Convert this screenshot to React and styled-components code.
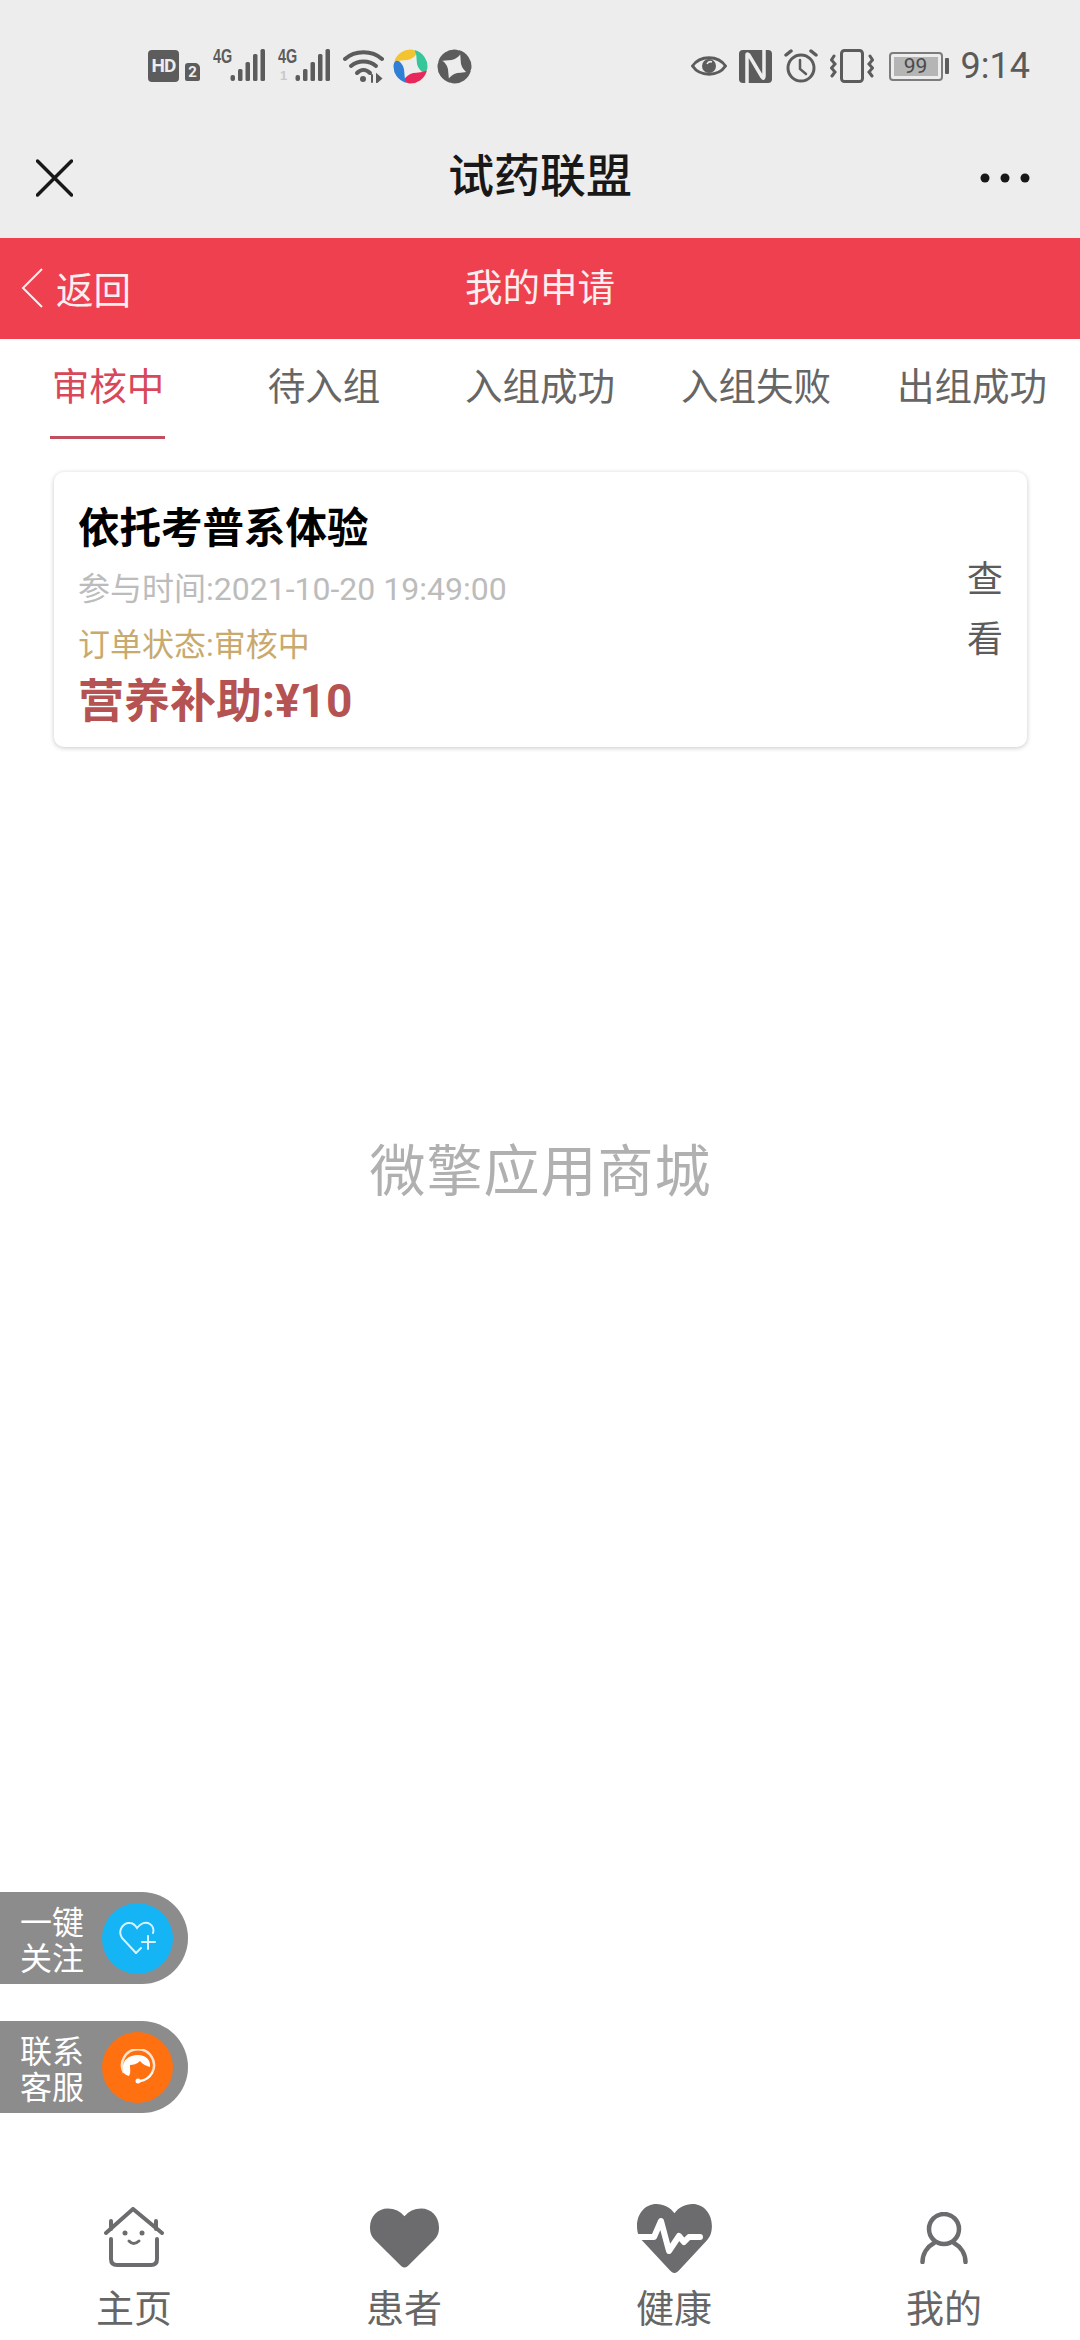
import React from "react";
import styled, { createGlobalStyle } from "styled-components";

const GlobalStyle = createGlobalStyle`
  html, body {
    margin: 0;
    padding: 0;
    background: #fff;
  }
  body {
    font-family: Roboto, "Noto Sans CJK SC", sans-serif;
  }
`;

const Page = styled.div`
  position: relative;
  width: 1080px;
  height: 2340px;
  overflow: hidden;
  display: flex;
  flex-direction: column;
  background: #fff;
`;

const Top = styled.div`
  height: 238px;
  background: #ededed;
  flex: none;
`;

const StatusBar = styled.div`
  height: 132px;
  padding: 0 50px 0 148px;
  box-sizing: border-box;
  display: flex;
  align-items: center;
  justify-content: space-between;
`;

const StatusGroup = styled.div`
  display: flex;
  align-items: center;
  gap: ${(p) => p.$gap || 7}px;
`;

const HdBadge = styled.span`
  width: 31px;
  height: 32px;
  border-radius: 4px;
  background: #5c5c5c;
  color: #ededed;
  font: 700 19px/32px Roboto, sans-serif;
  text-align: center;
  letter-spacing: -1px;
`;

const SimBadge = styled.span`
  width: 15px;
  height: 18px;
  margin: 12px 6px 0 -1px;
  border-radius: 3px 5px 2px 2px;
  background: #5c5c5c;
  color: #ededed;
  font: 700 15px/18px Roboto, sans-serif;
  text-align: center;
`;

const Signal = styled.div`
  position: relative;
  width: 53px;
  height: 34px;
  display: flex;
  justify-content: flex-end;
  margin-right: 5px;
`;

const SignalTag = styled.span`
  position: absolute;
  left: 0;
  top: -3px;
  color: #5c5c5c;
  font: 700 20px/20px "Liberation Sans", sans-serif;
  transform: scaleX(0.72);
  transform-origin: left top;
`;

const SignalSub = styled.span`
  position: absolute;
  left: 2px;
  bottom: 0;
  color: #c8c8c8;
  font: 700 13px/14px "Liberation Sans", sans-serif;
`;

const BatteryBox = styled.div`
  display: flex;
  align-items: center;
  gap: 2px;
  margin-left: 3px;
`;

const BatteryShell = styled.div`
  width: 54px;
  height: 29px;
  box-sizing: border-box;
  padding: 3px;
  border: 2px solid #7c7c7c;
  border-radius: 4px;
`;

const BatteryFill = styled.div`
  height: 100%;
  background: #b5b5b5;
  color: #4a4a4a;
  font: 400 21px/19px Roboto, sans-serif;
  text-align: center;
`;

const BatteryTip = styled.div`
  width: 4px;
  height: 16px;
  border-radius: 1px;
  background: #5c5c5c;
`;

const Clock = styled.span`
  color: #5a5a5a;
  font: 400 36px/40px Roboto, sans-serif;
`;

const TitleBar = styled.div`
  height: 106px;
  padding: 0 36px 14px;
  box-sizing: border-box;
  display: grid;
  grid-template-columns: 1fr auto 1fr;
  align-items: center;
`;

const BarEnd = styled.div`
  display: flex;
  justify-content: ${(p) => (p.$right ? "flex-end" : "flex-start")};
  padding-right: ${(p) => (p.$right ? 14 : 0)}px;
`;

const AppTitle = styled.div`
  margin-bottom: 13px;
  color: #181818;
  font: 500 46px/60px "Noto Sans CJK SC", sans-serif;
`;

const RedBar = styled.div`
  position: relative;
  height: 101px;
  flex: none;
  background: #ee404f;
  color: #fbeeee;
  display: flex;
  justify-content: center;
`;

const RedTitle = styled.div`
  font: 400 37.5px/94px "Noto Sans CJK SC", sans-serif;
`;

const BackLink = styled.div`
  position: absolute;
  left: 21px;
  top: 30px;
  display: flex;
  align-items: center;
  gap: 13px;
  font: 400 37.5px/40px "Noto Sans CJK SC", sans-serif;
`;

const Tabs = styled.div`
  height: 100px;
  flex: none;
  display: grid;
  grid-template-columns: repeat(5, 1fr);
`;

const Tab = styled.div`
  position: relative;
  text-align: center;
  color: ${(p) => (p.$active ? "#d8475a" : "#666")};
  font: 400 37.5px/90px "Noto Sans CJK SC", sans-serif;
  &::after {
    content: "";
    display: ${(p) => (p.$active ? "block" : "none")};
    position: absolute;
    left: 50px;
    right: 51px;
    bottom: 0;
    height: 3px;
    background: #c04f60;
  }
`;

const Main = styled.div`
  flex: 1;
  display: flex;
  flex-direction: column;
  padding: 33px 53px 0 54px;
`;

const Card = styled.div`
  height: 275px;
  box-sizing: border-box;
  padding: 27px 24px 0 24px;
  border-radius: 10px;
  background: #fff;
  box-shadow: 0 1px 5px rgba(0, 0, 0, 0.22);
  display: flex;
  justify-content: space-between;
`;

const CardInfo = styled.div`
  display: flex;
  flex-direction: column;
`;

const CardTitle = styled.div`
  color: #000;
  font: 700 41.5px/52px "Noto Sans CJK SC", sans-serif;
`;

const CardTime = styled.div`
  margin-top: 16px;
  color: #bcbcbc;
  font: 400 32px/44px Roboto, "Noto Sans CJK SC", sans-serif;
`;

const CardStatus = styled.div`
  margin-top: 12px;
  color: #c9aa6e;
  font: 400 32px/44px Roboto, "Noto Sans CJK SC", sans-serif;
`;

const CardPrice = styled.div`
  margin-top: 6px;
  color: #b55252;
  font: 700 46px/56px Roboto, "Noto Sans CJK SC", sans-serif;
`;

const ViewLink = styled.div`
  width: 36px;
  margin-top: 47px;
  color: #5c5c5c;
  font: 400 36px/60px "Noto Sans CJK SC", sans-serif;
`;

const Watermark = styled.div`
  margin-top: 385px;
  text-align: center;
  color: #b0b0b0;
  letter-spacing: 1px;
  font: 400 56px/70px "Noto Sans CJK SC", sans-serif;
`;

const FloatButton = styled.div`
  position: absolute;
  left: 0;
  top: ${(p) => p.$top}px;
  width: 188px;
  height: 92px;
  box-sizing: border-box;
  padding: 0 15px 0 20px;
  border-radius: 0 46px 46px 0;
  background: #8c8c8c;
  display: flex;
  align-items: center;
  justify-content: space-between;
`;

const FloatLabel = styled.div`
  width: 64px;
  color: #fff;
  font: 400 32px/36px "Noto Sans CJK SC", sans-serif;
`;

const FloatCircle = styled.div`
  width: 71px;
  height: 71px;
  border-radius: 50%;
  background: ${(p) => p.$color};
  display: flex;
  align-items: center;
  justify-content: center;
`;

const BottomNav = styled.div`
  height: 140px;
  flex: none;
  display: grid;
  grid-template-columns: repeat(4, 1fr);
`;

const NavItem = styled.div`
  padding-top: 3px;
  margin-left: -2px;
  display: flex;
  flex-direction: column;
  align-items: center;
`;

const NavIcon = styled.div`
  height: 70px;
  display: flex;
  align-items: center;
  justify-content: center;
`;

const NavLabel = styled.div`
  margin-top: 13px;
  color: #666;
  font: 400 38px/40px "Noto Sans CJK SC", sans-serif;
`;

const GREY = "#5c5c5c";
const NAV_GREY = "#6c6c6e";

const SignalBars = () => (
  <svg width="36" height="34" viewBox="0 0 36 34" fill={GREY}>
    <rect x="0.500" y="26" width="4.500" height="6" rx="2" />
    <rect x="8" y="20" width="4.500" height="12" rx="1.500" />
    <rect x="15.500" y="13" width="4.500" height="19" rx="1.500" />
    <rect x="23" y="5" width="4.500" height="27" rx="1.500" />
    <rect x="30.500" y="0" width="4.500" height="32" rx="1.500" />
  </svg>
);

const WifiIcon = () => (
  <svg width="42" height="34" viewBox="0 0 42 34" fill="none" stroke={GREY} strokeWidth="4" strokeLinecap="round">
    <path d="M2 10C12 1 29 1 39 10" />
    <path d="M8 17C15 11 26 11 33 17" />
    <path d="M14 24C18 20 23 20 27 24" />
    <circle cx="20" cy="30" r="3" fill={GREY} stroke="none" />
    <path d="M29 26v7M34 33v-7l4 3.500z" strokeWidth="2" fill={GREY} />
  </svg>
);

// four blades round a circle, also used for the grey variant
const Pinwheel = ({ colors }) => (
  <svg width="37" height="37" viewBox="0 0 36 36">
    {colors.map((c, i) => (
      <path
        key={c + i}
        d="M2 14A16.500 16.500 0 0 1 20 1.600Q25 3 23 7Q19 12 12 12Q6 12 2 14Z"
        fill={c}
        transform={`rotate(${i * 90} 18 18)`}
      />
    ))}
  </svg>
);

const EyeIcon = () => (
  <svg width="36" height="28" viewBox="0 0 36 28" fill="none" stroke={GREY} strokeWidth="3">
    <path d="M1.500 14C9 3 27 3 34.500 14C27 25 9 25 1.500 14Z" />
    <circle cx="18" cy="14" r="7" fill={GREY} stroke="none" />
    <path d="M16 12a4 4 0 0 1 5-2" stroke="#ededed" strokeWidth="1.500" />
  </svg>
);

const NfcIcon = () => (
  <svg width="33" height="33" viewBox="0 0 33 33">
    <rect width="33" height="33" rx="4" fill={GREY} />
    <path d="M8 33V5Q8 3 10 5L23 27Q25 30 25 26V0" fill="none" stroke="#ededed" strokeWidth="3.500" />
  </svg>
);

const AlarmIcon = () => (
  <svg width="34" height="34" viewBox="0 0 34 34" fill="none" stroke={GREY} strokeWidth="3" strokeLinecap="round">
    <circle cx="17" cy="19" r="13" />
    <path d="M16 11V20L22 25" strokeWidth="2.500" />
    <path d="M2 6L7 2M32 6L27 2" strokeWidth="3.500" />
  </svg>
);

const VibrateIcon = () => (
  <svg width="44" height="34" viewBox="0 0 44 34" fill="none" stroke={GREY} strokeLinecap="round">
    <rect x="11.500" y="1.500" width="21" height="31" rx="3" strokeWidth="3" />
    <path d="M4 7L1.500 11L5 15L1.500 19L5 23L2 27" strokeWidth="3" />
    <path d="M40 7L42.500 11L39 15L42.500 19L39 23L42 27" strokeWidth="3" />
  </svg>
);

const CloseIcon = () => (
  <svg width="37" height="38" viewBox="0 0 37 38" stroke="#181818" strokeWidth="3.500" strokeLinecap="round">
    <path d="M1.500 2L35.500 36M35.500 2L1.500 36" />
  </svg>
);

const MoreIcon = () => (
  <svg width="50" height="10" viewBox="0 0 50 10" fill="#181818">
    <circle cx="5" cy="5" r="4.500" />
    <circle cx="25" cy="5" r="4.500" />
    <circle cx="45" cy="5" r="4.500" />
  </svg>
);

const BackIcon = () => (
  <svg width="22" height="40" viewBox="0 0 22 40" fill="none" stroke="#fbeeee" strokeWidth="2">
    <path d="M21 1L2 20L21 39" />
  </svg>
);

const HeartPlusIcon = () => (
  <svg width="38" height="34" viewBox="0 0 38 34" fill="none" stroke="#d8f3ff" strokeWidth="2" strokeLinecap="round">
    <path d="M17 32L3 17C-2 9 5 1 11 2C14 2 16 4 18 7C21 3 26 0 31 3C34 5 35 9 34 12" />
    <path d="M17 32L22 27" />
    <path d="M29 15V28M23 21H36" />
  </svg>
);

const AgentIcon = () => (
  <svg width="36" height="36" viewBox="0 0 36 36" fill="none">
    <path d="M4 24A16 16 0 1 1 32 24" stroke="#ffe3cc" strokeWidth="2.500" />
    <path d="M32 24Q28 31 20 32" stroke="#fff" strokeWidth="2.500" strokeLinecap="round" />
    <circle cx="18" cy="32" r="2.500" fill="#fff" />
    <path d="M3 20C2 11 9 6 18 6C26 6 31 11 30 18C26 17 22 15 20 12C17 15 13 16 10 16C10 21 11 24 9 27C5 26 3 24 3 20Z" fill="#fff" />
  </svg>
);

const HomeIcon = () => (
  <svg width="60" height="62" viewBox="0 0 60 62" fill="none" stroke={NAV_GREY} strokeWidth="4" strokeLinecap="round">
    <path d="M2 26L29 2L58 26" />
    <path d="M7 14V22M52 14V22" />
    <path d="M7 32V52Q7 58 13 58H47Q53 58 53 52V32" />
    <circle cx="21" cy="26" r="2.500" fill={NAV_GREY} stroke="none" />
    <circle cx="38" cy="26" r="2.500" fill={NAV_GREY} stroke="none" />
    <path d="M25 34Q29.500 39 35 34" strokeWidth="3" />
  </svg>
);

const HEART = "M35 60C33 60 32 59 30 57L5 32C1 28 0 24 0 19C0 8 8 0 18 0C25 0 31 3 35 8C39 3 45 0 52 0C62 0 70 8 70 19C70 24 69 28 65 32L40 57C38 59 37 60 35 60Z";

const HeartIcon = () => (
  <svg width="69" height="60" viewBox="0 0 70 60">
    <path d={HEART} fill={NAV_GREY} />
  </svg>
);

const HealthIcon = () => (
  <svg width="75" height="69" viewBox="0 0 75 69" fill="none">
    <path d={HEART} fill={NAV_GREY} transform="scale(1.07 1.15)" />
    <path d="M-2 33H17L24 17L32 47L42 32L47 38L52 33H63" stroke="#fff" strokeWidth="6" strokeLinecap="round" strokeLinejoin="round" />
  </svg>
);

const UserIcon = () => (
  <svg width="48" height="52" viewBox="0 0 48 52" fill="none" stroke={NAV_GREY} strokeWidth="4.500" strokeLinecap="round">
    <circle cx="24" cy="17" r="15" />
    <path d="M2.500 50A22 22 0 0 1 14 31M34 31A22 22 0 0 1 45.500 50" />
  </svg>
);

const tabs = ["审核中", "待入组", "入组成功", "入组失败", "出组成功"];

const navItems = [
  { label: "主页", icon: <HomeIcon /> },
  { label: "患者", icon: <HeartIcon /> },
  { label: "健康", icon: <HealthIcon /> },
  { label: "我的", icon: <UserIcon /> },
];

const App = () => {
  return (
    <Page>
      <GlobalStyle />
      <Top>
        <StatusBar>
          <StatusGroup>
            <HdBadge>HD</HdBadge>
            <SimBadge>2</SimBadge>
            <Signal>
              <SignalTag>4G</SignalTag>
              <SignalBars />
            </Signal>
            <Signal>
              <SignalTag>4G</SignalTag>
              <SignalSub>1</SignalSub>
              <SignalBars />
            </Signal>
            <WifiIcon />
            <Pinwheel colors={["#f4c430", "#35c79a", "#e8285a", "#2f7fd6"]} />
            <Pinwheel colors={[GREY, GREY, GREY, GREY]} />
          </StatusGroup>
          <StatusGroup $gap={12}>
            <EyeIcon />
            <NfcIcon />
            <AlarmIcon />
            <VibrateIcon />
            <BatteryBox>
              <BatteryShell>
                <BatteryFill>99</BatteryFill>
              </BatteryShell>
              <BatteryTip />
            </BatteryBox>
            <Clock>9:14</Clock>
          </StatusGroup>
        </StatusBar>
        <TitleBar>
          <BarEnd><CloseIcon /></BarEnd>
          <AppTitle>试药联盟</AppTitle>
          <BarEnd $right><MoreIcon /></BarEnd>
        </TitleBar>
      </Top>
      <RedBar>
        <BackLink>
          <BackIcon />
          返回
        </BackLink>
        <RedTitle>我的申请</RedTitle>
      </RedBar>
      <Tabs>
        {tabs.map((t, i) => (
          <Tab key={t} $active={i === 0}>{t}</Tab>
        ))}
      </Tabs>
      <Main>
        <Card>
          <CardInfo>
            <CardTitle>依托考普系体验</CardTitle>
            <CardTime>参与时间:2021-10-20 19:49:00</CardTime>
            <CardStatus>订单状态:审核中</CardStatus>
            <CardPrice>营养补助:¥10</CardPrice>
          </CardInfo>
          <ViewLink>查看</ViewLink>
        </Card>
        <Watermark>微擎应用商城</Watermark>
      </Main>
      <FloatButton $top={1892}>
        <FloatLabel>一键关注</FloatLabel>
        <FloatCircle $color="#14b4f5"><HeartPlusIcon /></FloatCircle>
      </FloatButton>
      <FloatButton $top={2021}>
        <FloatLabel>联系客服</FloatLabel>
        <FloatCircle $color="#ff7010"><AgentIcon /></FloatCircle>
      </FloatButton>
      <BottomNav>
        {navItems.map((n) => (
          <NavItem key={n.label}>
            <NavIcon>{n.icon}</NavIcon>
            <NavLabel>{n.label}</NavLabel>
          </NavItem>
        ))}
      </BottomNav>
    </Page>
  );
};

export default App;
